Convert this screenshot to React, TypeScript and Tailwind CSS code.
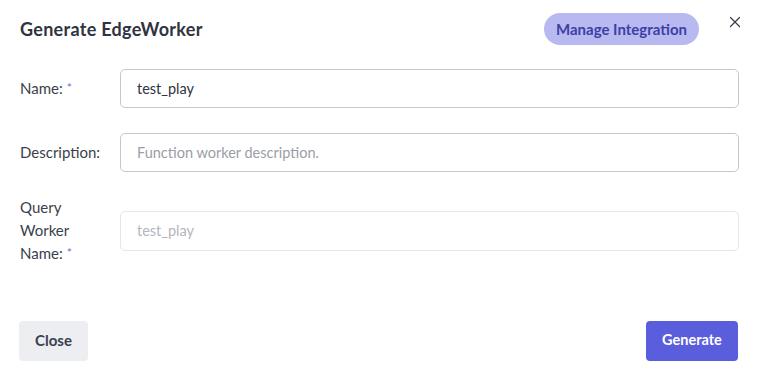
import { X } from 'lucide-react';

const font = { fontFamily: 'Lato, "Noto Sans", sans-serif' };

function Label({ children, required }: { children: React.ReactNode; required?: boolean }) {
  return (
    <div className="w-[100px] shrink-0 text-[15px] leading-[23px] text-[#3a3f4b]">
      {children}
      {required && <span className="ml-1 text-[12px] leading-none relative -top-[2px] text-[#6b6fe0]">*</span>}
    </div>
  );
}

export default function App() {
  return (
    <div className="w-[760px] h-[375px] bg-white relative" style={font}>
      <div className="flex items-center justify-between pl-5 pr-[16px] pt-[13px]">
        <h1 className="text-[18px] font-bold text-[#2f3440] tracking-[0.3px]">Generate EdgeWorker</h1>
        <div className="flex items-center gap-[27px]">
          <button className="h-[32px] px-[12px] rounded-full bg-[#b8b9f1] text-[#3c40a6] text-[15px] font-bold">
            Manage Integration
          </button>
          <X size={18} strokeWidth={1.6} className="text-[#3a3f4b] -mt-[14px]" />
        </div>
      </div>

      <div className="pl-5 pr-[21px] mt-[24px]">
        <div className="flex items-center">
          <Label required>Name:</Label>
          <div className="flex-1 h-[39px] flex items-center px-4 rounded-[5px] border border-[#c3c8d0] text-[14.5px] text-[#2f3440]">
            test_play
          </div>
        </div>
        <div className="flex items-center mt-[25px]">
          <Label>Description:</Label>
          <div className="flex-1 h-[39px] flex items-center px-4 rounded-[5px] border border-[#c3c8d0] text-[14.5px] text-[#9a9ea6]">
            Function worker description.
          </div>
        </div>
        <div className="flex items-center mt-[24px]">
          <Label required>
            Query
            <br />
            Worker
            <br />
            Name:
          </Label>
          <div className="flex-1 h-[40px] flex items-center px-4 rounded-[5px] border border-[#e5e7eb] text-[14.5px] text-[#b3b6bc]">
            test_play
          </div>
        </div>
      </div>

      <div className="flex justify-between pl-[19px] pr-[22px] mt-[56px]">
        <button className="w-[69px] h-[40px] pb-[2px] rounded-[4px] bg-[#eceef1] text-[15px] font-bold text-[#3a4150]">
          Close
        </button>
        <button className="w-[92px] h-[40px] pb-[2px] rounded-[4px] bg-[#5a5ddc] text-[14.5px] font-bold text-white">
          Generate
        </button>
      </div>
    </div>
  );
}
